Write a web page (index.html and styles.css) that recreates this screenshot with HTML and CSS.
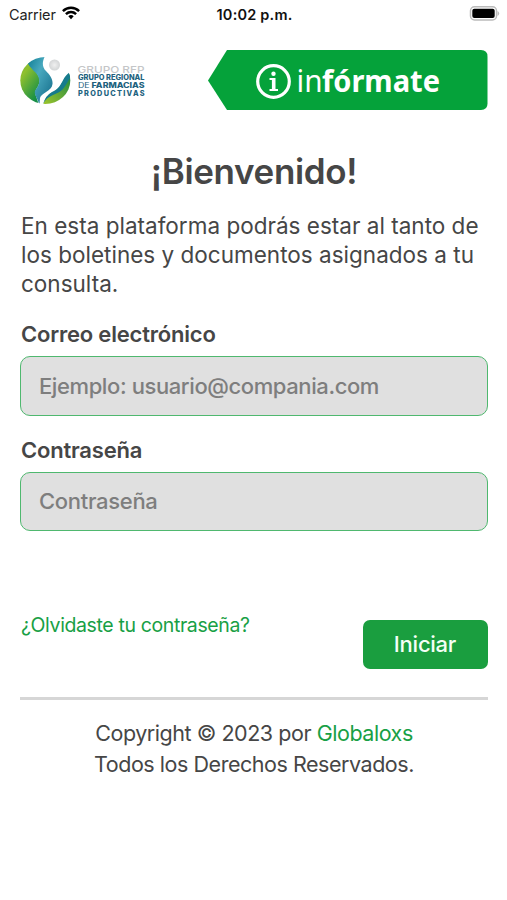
FILE: index.html
```html
<!DOCTYPE html>
<html lang="es">
<head>
<meta charset="utf-8">
<title>Infórmate</title>
<link rel="stylesheet" href="styles.css">
</head>
<body>
<div class="status">
  <div class="carrier"><span>Carrier</span>
    <svg width="18" height="14" viewBox="0 0 18 14" fill="none" stroke="#000" stroke-width="2.5"><path d="M.9 5.1C5.5.7 12.500.7 17.100 5.100"/><path d="M3.900 8.200C6.900 5.400 11.100 5.400 14.100 8.200"/><path d="M6.300 10.200Q9 7.800 11.700 10.200L9 13.300Z" fill="#000" stroke="none"/></svg>
  </div>
  <span class="clock">10:02 p.m.</span>
  <svg class="battery" width="31" height="15" viewBox="0 0 31 15"><rect x="1.500" y=".8" width="26" height="13.200" rx="4" fill="#fff" stroke="#bbb" stroke-width="1.500"/><rect x="3.300" y="2.700" width="22.400" height="9.400" rx="2" fill="#000"/><path d="M28.500 5v5q1.700-.8 1.700-2.500T28.500 5" fill="#bbb"/></svg>
</div>
<main>
  <header>
    <svg class="brand" width="128" height="60" viewBox="20 50 128 60">
      <defs>
        <linearGradient id="leaf" x1="0" y1="0" x2=".6" y2="1"><stop offset="0" stop-color="#6fae3a"/><stop offset=".4" stop-color="#8fc02f"/><stop offset="1" stop-color="#168f45"/></linearGradient>
        <linearGradient id="wave" x1="0" y1="0" x2="1" y2="1"><stop offset="0" stop-color="#0b7a90"/><stop offset=".4" stop-color="#49a9bf"/><stop offset="1" stop-color="#0f6785"/></linearGradient>
        <linearGradient id="low" x1="0" y1="1" x2="1" y2="0"><stop offset="0" stop-color="#a2c72b"/><stop offset="1" stop-color="#118346"/></linearGradient>
        <radialGradient id="ball"><stop offset="0" stop-color="#f0f0f0"/><stop offset="1" stop-color="#d3d5d6"/></radialGradient>
        <clipPath id="disc"><ellipse cx="45.300" cy="80.500" rx="25" ry="23.500"/></clipPath>
      </defs>
      <g clip-path="url(#disc)">
        <path d="M18 54H29C29 67 39 71 39.500 80C40 87 33 90 36 96L39 105H18Z" fill="url(#leaf)"/>
        <path d="M27 61Q34 54 45 56C42 62 42 67 46 71C50 75 53 79 52.500 84C52 91 41 93 40 98L39.500 105C37 97 34 95 35 91C37 87 40 85 39 79C38 72 29 69 27 61Z" fill="url(#wave)"/>
        <path d="M72 72C61 77 64 88 52 92.500Q46 95 43 105H72Z" fill="url(#low)"/>
        <path d="M72 71C61 76 64 87 52 92Q46 95 43 104C48 94 58 95 63 89C67 84 68 80 72 76Z" fill="#167b8d"/>
      </g>
      <circle cx="54.500" cy="65" r="5.500" fill="url(#ball)"/>
      <g class="brand-text">
        <text class="brand-top" x="77.500" y="72.500" textLength="67" lengthAdjust="spacingAndGlyphs">GRUPO RFP</text>
        <text x="78" y="80.400" textLength="66.500" lengthAdjust="spacingAndGlyphs">GRUPO REGIONAL</text>
        <text x="78" y="88.100" textLength="66.500" lengthAdjust="spacingAndGlyphs"><tspan class="thin">DE</tspan> FARMACIAS</text>
        <text class="spaced" x="78" y="95.900" textLength="66.500">PRODUCTIVAS</text>
      </g>
    </svg>
    <svg class="banner" width="280" height="60" viewBox="0 0 280 60">
      <path d="M0 30.500L19 0H273Q279.500 0 279.500 6.500V53.500Q279.500 60 273 60H19Z" fill="#05a23a"/>
      <circle cx="65.500" cy="31.500" r="15.800" fill="none" stroke="#fff" stroke-width="3.200"/>
      <circle cx="65.500" cy="23.800" r="2.200" fill="#fff"/>
      <path d="M61.500 28H67.500V39H70V41H61.500V39H63.900V30H61.500Z" fill="#fff"/>
      <text class="light-word" x="88.500" y="41.500" textLength="26" lengthAdjust="spacingAndGlyphs">in</text>
      <text class="bold-word" x="114" y="41.500" textLength="118" lengthAdjust="spacingAndGlyphs">fórmate</text>
    </svg>
  </header>
  <h1>¡Bienvenido!</h1>
  <p class="intro">En esta plataforma podrás estar al tanto de<br>los boletines y documentos asignados a tu<br>consulta.</p>
  <form>
    <label for="mail">Correo electrónico</label>
    <input id="mail" type="email" placeholder="Ejemplo: usuario@compania.com">
    <label for="pass">Contraseña</label>
    <input id="pass" class="pass" type="password" placeholder="Contraseña">
    <div class="actions">
      <a href="#">¿Olvidaste tu contraseña?</a>
      <button type="button">Iniciar</button>
    </div>
  </form>
  <footer>
    <p>Copyright © 2023 por <a href="#">Globaloxs</a></p>
    <p>Todos los Derechos Reservados.</p>
  </footer>
</main>
</body>
</html>
```
FILE: styles.css
```css
* { box-sizing: border-box; }
body { margin: 0; background: #fff; color: #464646; font-family: Inter, "Liberation Sans", sans-serif; }
.status { display: grid; grid-template-columns: 1fr auto 1fr; align-items: center; height: 28px; padding: 0 7px 0 9px; color: #222; font-size: 14.500px; }
.carrier { display: flex; align-items: center; gap: 6px; letter-spacing: -.1px; }
.carrier svg { margin-top: -3px; }
.clock { font-weight: 600; font-size: 14.500px; letter-spacing: .2px; color: #111; }
.battery { justify-self: end; margin-top: -2px; }
main { padding: 22px 19px 0 20px; }
header { display: flex; justify-content: space-between; height: 60px; }
.brand-text { font-family: Inter, sans-serif; font-weight: 800; font-size: 7.300px; fill: #21627e; }
.brand-top { font-weight: 500; font-size: 9.500px; fill: #c4c6c8; }
.thin { font-weight: 400; }
.light-word, .bold-word { font-family: "Noto Sans", sans-serif; font-size: 31px; fill: #fff; }
.light-word { font-weight: 400; }
.bold-word { font-weight: 700; }
h1 { margin: 39px 0 0; font-size: 35px; line-height: 44px; font-weight: 600; text-align: center; letter-spacing: -.35px; }
.intro { margin: 18px 0 0 1px; font-size: 22.500px; line-height: 29px; white-space: nowrap; letter-spacing: .01px; }
form { margin-top: 22px; }
label { display: block; height: 36px; padding-left: 1px; line-height: 28px; font-size: 22px; font-weight: 600; letter-spacing: -.2px; }
input { display: block; width: 468px; height: 60px; margin: 0 0 20px; padding: 0 18px 1px; border: 1.500px solid #4fb86f; border-radius: 10px; background: #e0e0e0; font: 500 22px Inter, sans-serif; letter-spacing: -.4px; }
input.pass { height: 59px; margin: 0; padding-bottom: 2px; letter-spacing: -.3px; }
input::placeholder { color: #7e7e7e; opacity: 1; }
a { color: #18a045; text-decoration: none; }
.actions { display: flex; justify-content: space-between; align-items: flex-start; margin-top: 89px; }
.actions a { padding-left: 1px; font-size: 19.500px; line-height: 10px; letter-spacing: -.38px; }
button { width: 125px; height: 49px; padding: 0 1px 1px 0; border: 0; border-radius: 7px; background: #1a9e3f; color: #f4fff6; font: 500 22px Inter, sans-serif; letter-spacing: -.25px; }
footer { margin-top: 28px; padding-top: 18px; border-top: 3px solid #d6d6d6; text-align: center; font-size: 21.500px; line-height: 31px; white-space: nowrap; letter-spacing: -.46px; }
footer p { margin: 0; }
```
